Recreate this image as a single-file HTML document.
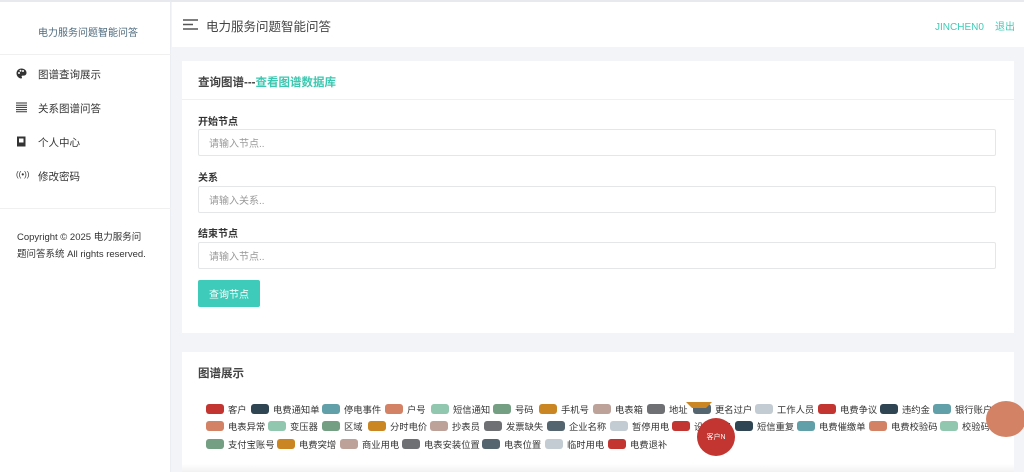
<!DOCTYPE html>
<html><head><meta charset="utf-8"><style>
*{margin:0;padding:0;box-sizing:border-box}
body{width:1024px;height:472px;overflow:hidden;background:#f3f4f8;font-family:"Liberation Sans","Noto Sans CJK SC",sans-serif;position:relative;color:#333}
.sb{position:absolute;left:0;top:0;width:171px;height:472px;background:#fff;border-right:1px solid #eaedf1;border-top:2px solid #e8e8ef}
.logo{position:absolute;left:38px;top:22px;font-size:10px;color:#4c6a7d}
.nav{position:absolute;left:0;width:171px;font-size:10.5px;color:#333}
.nav span{position:absolute;left:38px}
.ic{position:absolute;left:16px;top:1px;font-size:10px;color:#333}
.hr{position:absolute;left:0;width:171px;height:1px;background:#f0f0f0}
.hd{position:absolute;left:172px;top:2px;width:852px;height:45px;background:#fff}
.top{position:absolute;left:0;top:0;width:1024px;height:2px;background:#e8e8ef}
.card{position:absolute;left:182px;width:832px;background:#fff}
.lab{position:absolute;left:16px;font-size:10px;font-weight:bold;color:#333}
.inp{position:absolute;left:16px;width:798px;height:27px;border:1px solid #e5e6e7;font-size:10px;color:#999;padding:0 10px;display:flex;align-items:center;border-radius:2px}
.lg{position:absolute;font-size:9.3px;color:#333;white-space:nowrap;line-height:11px}
.lg i{display:inline-block;width:18px;height:10px;border-radius:3px;vertical-align:-1px;margin-right:4px}
</style></head><body>
<div class="top"></div>
<div class="sb">
<div class="logo">电力服务问题智能问答</div>
<div class="hr" style="top:52px"></div>
<div class="nav" style="top:65px"><svg class="ic" width="11" height="11" viewBox="0 0 11 11"><path d="M5.5 0.5C2.5 0.5 0.5 2.7 0.5 5.3 0.5 8 2.6 10.5 5.2 10.5c1 0 1-1 .5-1.6-.4-.5 0-1.3.8-1.3h1.3c1.7 0 2.7-1.2 2.7-2.8C10.5 2.3 8.4.5 5.5.5z" fill="#333"/><circle cx="3" cy="5" r="1" fill="#fff"/><circle cx="4.5" cy="2.8" r="1" fill="#fff"/><circle cx="7" cy="3" r="1" fill="#fff"/></svg><span>图谱查询展示</span></div>
<div class="nav" style="top:99px"><svg class="ic" width="11" height="11" viewBox="0 0 11 11"><path d="M0 1h11M0 3.2h11M0 5.4h11M0 7.6h11M0 9.8h11" stroke="#333" stroke-width="1"/></svg><span>关系图谱问答</span></div>
<div class="nav" style="top:133px"><svg class="ic" width="11" height="11" viewBox="0 0 11 11"><rect x="1" y="0.5" width="8.5" height="10" fill="#333"/><rect x="3" y="2.5" width="4.5" height="4" fill="#fff"/></svg><span>个人中心</span></div>
<div class="nav" style="top:167px"><span style="left:16px;font-size:8px;top:1px">((•))</span><span>修改密码</span></div>
<div class="hr" style="top:206px"></div>
<div style="position:absolute;left:17px;top:227px;font-size:9.5px;line-height:17px;color:#333;width:150px">Copyright © 2025 电力服务问<br>题问答系统 All rights reserved.</div>
</div>
<div class="hd">
<svg style="position:absolute;left:11px;top:17px" width="15" height="11" viewBox="0 0 15 11"><path d="M0 1h15M0 5.5h10M0 10h15" stroke="#555" stroke-width="1.5"/></svg>
<div style="position:absolute;left:34px;top:14px;font-size:12.5px;color:#444">电力服务问题智能问答</div>
<div style="position:absolute;top:16px;font-size:10px;color:#3fcbb6;left:763px">JINCHEN0&nbsp;&nbsp;&nbsp;&nbsp;退出</div>
</div>
<div class="card" style="top:61px;height:272px">
<div style="position:absolute;left:16px;top:13px;font-size:11.5px;font-weight:bold;color:#444">查询图谱---<span style="color:#3bc7b0">查看图谱数据库</span></div>
<div style="position:absolute;left:0;top:38px;width:832px;height:1px;background:#f0f0f3"></div>
<div class="lab" style="top:52px">开始节点</div>
<div class="inp" style="top:68px">请输入节点..</div>
<div class="lab" style="top:108px">关系</div>
<div class="inp" style="top:125px">请输入关系..</div>
<div class="lab" style="top:164px">结束节点</div>
<div class="inp" style="top:181px">请输入节点..</div>
<div style="position:absolute;left:16px;top:219px;width:62px;height:27px;background:#3ecbb9;border-radius:2px;color:#fff;font-size:10px;display:flex;align-items:center;justify-content:center">查询节点</div>
</div>
<div class="card" style="top:352px;height:120px;overflow:hidden">
<div style="position:absolute;left:16px;top:13px;font-size:11.5px;font-weight:bold;color:#444">图谱展示</div>
<div style="position:absolute;left:0;top:112px;width:832px;height:10px;background:linear-gradient(#fff,#eee)"></div>
</div>
<div id="lg"></div>
<div style="position:absolute;left:686px;top:402px;width:26px;height:0;border-left:6px solid transparent;border-right:6px solid transparent;border-top:6px solid #ca8622"></div>
<div style="position:absolute;left:697px;top:418px;width:38px;height:38px;border-radius:50%;background:#c23531;color:#fff;font-size:7px;display:flex;align-items:center;justify-content:center">客户N</div>
<div style="position:absolute;left:986px;top:401px;width:40px;height:36px;border-radius:50%;background:#d48265"></div>
<script>
var C=['#c23531','#2f4554','#61a0a8','#d48265','#91c7ae','#749f83','#ca8622','#bda29a','#6e7074','#546570','#c4ccd3'];
var R=[[409,[[206,'客户'],[251,'电费通知单'],[322,'停电事件'],[385,'户号'],[431,'短信通知'],[493,'号码'],[539,'手机号'],[593,'电表箱'],[647,'地址'],[693,'更名过户'],[755,'工作人员'],[818,'电费争议'],[880,'违约金'],[933,'银行账户']]],
[426,[[206,'电表异常'],[268,'变压器'],[322,'区域'],[368,'分时电价'],[430,'抄表员'],[484,'发票缺失'],[547,'企业名称'],[610,'暂停用电'],[672,'设备迁移'],[735,'短信重复'],[797,'电费催缴单'],[869,'电费校验码'],[940,'校验码']]],
[444,[[206,'支付宝账号'],[277,'电费突增'],[340,'商业用电'],[402,'电表安装位置'],[482,'电表位置'],[545,'临时用电'],[608,'电费退补']]]];
var h='',k=0;R.forEach(function(r){r[1].forEach(function(it){h+='<div class="lg" style="left:'+it[0]+'px;top:'+(r[0]-5)+'px"><i style="background:'+C[k%11]+'"></i>'+it[1]+'</div>';k++;});});
document.getElementById('lg').innerHTML=h;
</script>
</body></html>
